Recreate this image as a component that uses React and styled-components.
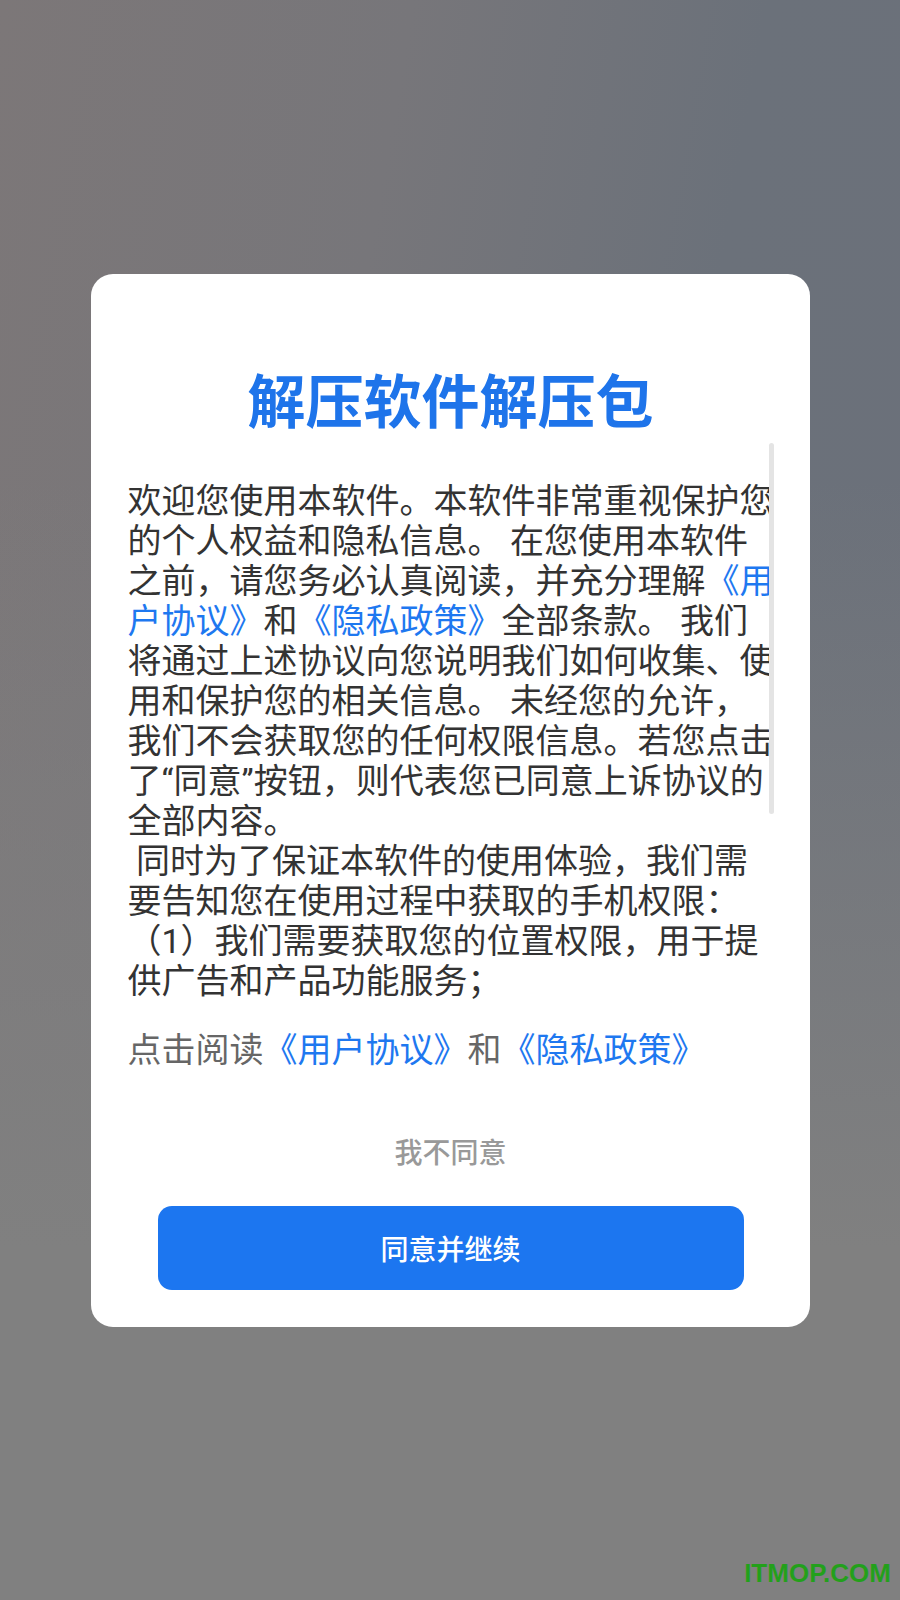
import React from 'react';
import styled, { createGlobalStyle } from 'styled-components';

const GlobalStyle = createGlobalStyle`
  html, body {
    margin: 0;
    padding: 0;
  }
  body {
    font-family: Roboto, "Noto Sans CJK SC", sans-serif;
  }
`;

const Backdrop = styled.div`
  position: relative;
  width: 900px;
  height: 1600px;
  display: flex;
  align-items: center;
  justify-content: center;
  background:
    linear-gradient(to bottom, rgba(128, 128, 128, 0) 30%, #808080 78%),
    linear-gradient(100deg, #7c7778 0%, #77767a 35%, #6b717a 65%, #6b707a 100%);
`;

const Card = styled.div`
  width: 719px;
  box-sizing: border-box;
  padding: 89px 36px 37px 37px;
  background: #ffffff;
  border-radius: 22px;
  display: flex;
  flex-direction: column;
`;

const Title = styled.h1`
  margin: 0;
  height: 70px;
  line-height: 70px;
  text-align: center;
  font-family: "Noto Sans CJK SC", sans-serif;
  font-size: 58px;
  font-weight: 700;
  color: #1e74ea;
`;

const ScrollArea = styled.div`
  position: relative;
  margin-top: 10px;
  height: 558px;
  overflow: hidden;
`;

const ScrollContent = styled.div`
  padding-top: 38px;
`;

const ScrollThumb = styled.div`
  position: absolute;
  top: 0;
  right: 0;
  width: 5px;
  height: 371px;
  border-radius: 3px;
  background: #e4e4e4;
`;

const Line = styled.div`
  height: 40px;
  line-height: 40px;
  font-size: 34px;
  white-space: pre;
  color: ${(p) => p.$color || '#333333'};
`;

const Link = styled.span`
  color: #1e78f0;
`;

const ReadLine = styled(Line)`
  margin-top: 29px;
`;

const Disagree = styled.button`
  margin-top: 51px;
  height: 60px;
  border: none;
  background: none;
  font-family: "Noto Sans CJK SC", sans-serif;
  font-size: 28px;
  font-weight: 500;
  color: #999999;
  cursor: pointer;
`;

const AgreeButton = styled.button`
  margin: 25px 30px 0 30px;
  height: 84px;
  border: none;
  border-radius: 14px;
  background: #1c76f0;
  font-family: "Noto Sans CJK SC", sans-serif;
  font-size: 28px;
  font-weight: 500;
  color: #ffffff;
  cursor: pointer;
`;

const Watermark = styled.div`
  position: absolute;
  right: 9px;
  bottom: 11px;
  font-family: "Liberation Sans", Arial, sans-serif;
  font-size: 26px;
  font-weight: 700;
  color: #23a01b;
`;

// each line is a list of [text, isLink]
const lines = [
  [['欢迎您使用本软件。本软件非常重视保护您']],
  [['的个人权益和隐私信息。 在您使用本软件']],
  [['之前，请您务必认真阅读，并充分理解'], ['《用', true]],
  [['户协议》', true], ['和'], ['《隐私政策》', true], ['全部条款。 我们']],
  [['将通过上述协议向您说明我们如何收集、使']],
  [['用和保护您的相关信息。 未经您的允许，']],
  [['我们不会获取您的任何权限信息。若您点击']],
  [['了“同意”按钮，则代表您已同意上诉协议的']],
  [['全部内容。']],
  [[' 同时为了保证本软件的使用体验，我们需']],
  [['要告知您在使用过程中获取的手机权限：']],
  [['（1）我们需要获取您的位置权限，用于提']],
  [['供广告和产品功能服务；']],
];

function PrivacyDialog() {
  return (
    <Card>
      <Title>解压软件解压包</Title>
      <ScrollArea>
        <ScrollContent>
          {lines.map((segs, i) => (
            <Line key={i}>
              {segs.map(([text, link], j) =>
                link ? <Link key={j}>{text}</Link> : <span key={j}>{text}</span>
              )}
            </Line>
          ))}
        </ScrollContent>
        <ScrollThumb />
      </ScrollArea>
      <ReadLine $color="#666666">
        点击阅读<Link>《用户协议》</Link>和<Link>《隐私政策》</Link>
      </ReadLine>
      <Disagree>我不同意</Disagree>
      <AgreeButton>同意并继续</AgreeButton>
    </Card>
  );
}

export default function App() {
  return (
    <>
      <GlobalStyle />
      <Backdrop>
        <PrivacyDialog />
        <Watermark>ITMOP.COM</Watermark>
      </Backdrop>
    </>
  );
}
